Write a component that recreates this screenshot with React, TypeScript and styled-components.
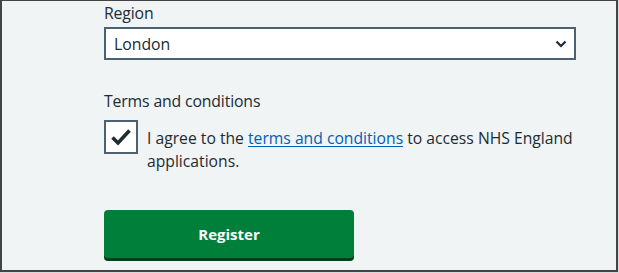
import React from 'react';
import styled, { createGlobalStyle } from 'styled-components';

const GlobalStyle = createGlobalStyle`
  html, body {
    margin: 0;
    padding: 0;
    background: #d8dadb;
  }
  body {
    font-family: "Open Sans", "Noto Sans", sans-serif;
    color: #212b32;
  }
`;

const Frame = styled.div`
  box-sizing: border-box;
  width: 618px;
  height: 272px;
  border: 2px solid #444;
  border-top-width: 1px;
  background: #f0f4f5;
  padding: 0 0 0 102px;
  overflow: hidden;
`;

const Field = styled.div<{ gap?: number }>`
  margin-bottom: ${({ gap }) => gap ?? 0}px;
`;

const Label = styled.div`
  font-size: 15.8px;
  line-height: 22px;
  margin-top: 1px;
  margin-bottom: 3px;
  letter-spacing: -0.15px;
`;

const SelectBox = styled.div`
  box-sizing: border-box;
  width: 472px;
  height: 33px;
  border: 2px solid #4c6272;
  background: #fff;
  display: flex;
  align-items: center;
  justify-content: space-between;
  padding: 0 7px 0 8px;
  font-size: 15.8px;
`;

const CheckRow = styled.div`
  display: flex;
  align-items: flex-start;
  gap: 9px;
  margin-top: 8px;
`;

const Box = styled.div`
  box-sizing: border-box;
  flex: 0 0 34px;
  height: 34px;
  border: 2px solid #4c6272;
  background: #fff;
  display: flex;
  align-items: center;
  justify-content: center;
`;

const CheckText = styled.div`
  font-size: 15.7px;
  line-height: 23px;
  padding-top: 7px;
  width: 445px;
`;

const Link = styled.a`
  color: #005eb8;
  text-decoration: underline;
  text-underline-offset: 2px;
`;

const Button = styled.button`
  box-sizing: border-box;
  margin-top: 37px;
  width: 250px;
  height: 48px;
  border: none;
  border-radius: 4px;
  background: #007f3b;
  box-shadow: 0 3px 0 #00401e;
  color: #fff;
  font-family: "Open Sans", "Noto Sans", sans-serif;
  font-weight: 700;
  font-size: 15px;
  cursor: pointer;
`;

const App: React.FC = () => (
  <>
    <GlobalStyle />
    <Frame>
      <Field gap={30}>
        <Label>Region</Label>
        <SelectBox>
          <span>London</span>
          <svg width="12" height="8" viewBox="0 0 12 8">
            <path d="M1.5 1.5 L6 6 L10.5 1.5" fill="none" stroke="#212b32" strokeWidth="2.2" />
          </svg>
        </SelectBox>
      </Field>
      <Field>
        <Label>Terms and conditions</Label>
        <CheckRow>
          <Box>
            <svg width="22" height="18" viewBox="0 0 22 18">
              <path d="M2.5 9.5 L8 15 L19.5 2.5" fill="none" stroke="#212b32" strokeWidth="3.6" />
            </svg>
          </Box>
          <CheckText>
            I agree to the <Link href="#">terms and conditions</Link> to access NHS England
            applications.
          </CheckText>
        </CheckRow>
      </Field>
      <Button>Register</Button>
    </Frame>
  </>
);

export default App;
